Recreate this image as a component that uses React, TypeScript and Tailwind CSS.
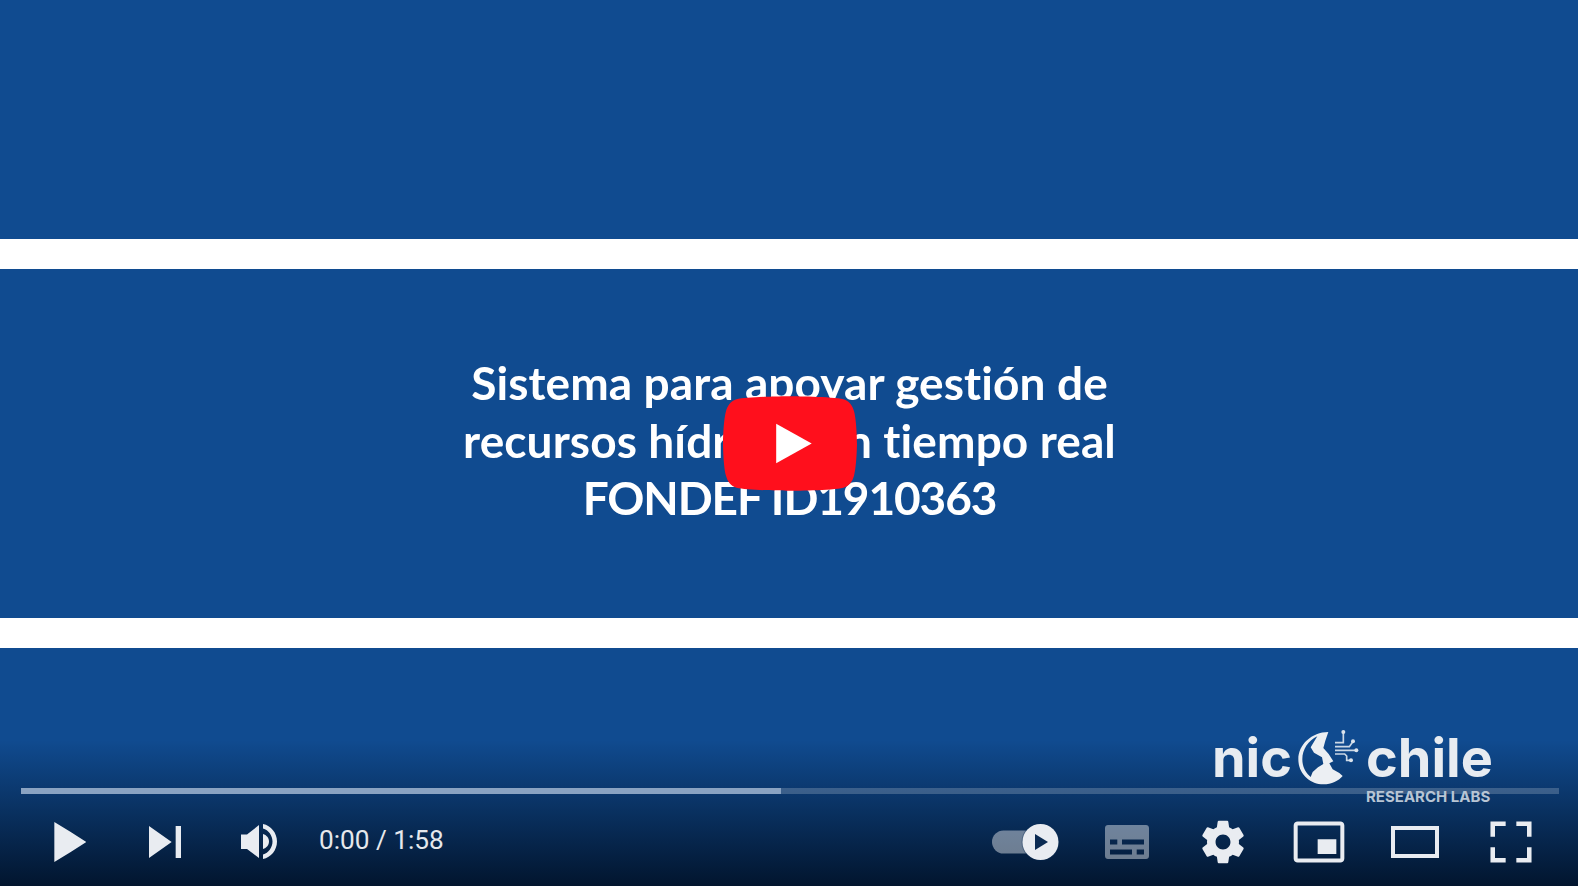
/* Embedded video player: paused title card with YouTube controls on top. */

function Icon({ d, className = 'w-24 h-24' }: { d: string; className?: string }) {
  return (
    <svg viewBox="0 0 36 36" className={className} fill="#e9ecf1" fillRule="evenodd">
      <path d={d} />
    </svg>
  );
}

const ICONS = {
  play: 'M12.5,25.5 L18.5,21.8 L18.5,14.2 L12.5,10.5 Z M18.5,21.8 L24.5,18 L24.5,18 L18.5,14.2 Z',
  next: 'M12,24 L20.5,18 L12,12 V24 Z M22,12 v12 h2 V12 h-2 Z',
  settings:
    'm23.94,18.78 c.03,-0.25 .05,-0.51 .05,-0.78 0,-0.27 -0.02,-0.52 -0.05,-0.78 l1.68,-1.32 c.15,-0.12 .19,-0.33 .09,-0.51 l-1.6,-2.76 c-0.09,-0.17 -0.31,-0.24 -0.48,-0.17 l-1.99,.8 c-0.41,-0.32 -0.86,-0.58 -1.35,-0.78 l-0.30,-2.12 c-0.02,-0.19 -0.19,-0.33 -0.39,-0.33 l-3.2,0 c-0.2,0 -0.36,.14 -0.39,.33 l-0.30,2.12 c-0.48,.2 -0.93,.47 -1.35,.78 l-1.99,-0.8 c-0.18,-0.07 -0.39,0 -0.48,.17 l-1.6,2.76 c-0.1,.17 -0.05,.39 .09,.51 l1.68,1.32 c-0.03,.25 -0.05,.52 -0.05,.78 0,.26 .02,.52 .05,.78 l-1.68,1.32 c-0.15,.12 -0.19,.33 -0.09,.51 l1.6,2.76 c.09,.17 .31,.24 .48,.17 l1.99,-0.8 c.41,.32 .86,.58 1.35,.78 l.30,2.12 c.02,.19 .19,.33 .39,.33 l3.2,0 c.2,0 .36,-0.14 .39,-0.33 l.30,-2.12 c.48,-0.2 .93,-0.47 1.35,-0.78 l1.99,.8 c.18,.07 .39,0 .48,-0.17 l1.6,-2.76 c.09,-0.17 .05,-0.39 -0.09,-0.51 l-1.68,-1.32 Z m-5.94,2.01 c-1.54,0 -2.8,-1.25 -2.8,-2.8 0,-1.54 1.25,-2.8 2.8,-2.8 1.54,0 2.8,1.25 2.8,2.8 0,1.54 -1.25,2.8 -2.8,2.8 Z',
  miniplayer:
    'M24.5,17 H17.5 V22.5 H24.5 Z M27.5,24.2 V11.8 C27.5,10.9 26.8,10.3 26,10.3 H10 C9.2,10.3 8.5,10.9 8.5,11.8 V24.2 C8.5,25.1 9.2,25.7 10,25.7 H26 C26.8,25.7 27.5,25.1 27.5,24.2 Z M26,24.2 H10 V11.8 H26 Z',
  theater: 'M27,12 V24 H9 V12 Z M25.5,13.5 H10.5 V22.5 H25.5 Z',
  fullscreen:
    'M10.3,16 h1.7 v-4 h4 v-1.7 H10.3 Z M20,10.3 v1.7 h4 v4 h1.7 V10.3 Z M24,24 h-4 v1.7 h5.7 v-5.7 h-1.7 Z M12,20 H10.3 v5.7 h5.7 v-1.7 h-4 Z',
};

function VolumeIcon() {
  return (
    <svg viewBox="0 0 36 36" className="w-9 h-9 -ml-1" fill="#e9ecf1">
      <path d="M0,10.5 H6 L18,1 V34 L6,25 H0 Z" />
      <path d="M22,10 C25.5,11 28,14 28,17.5 C28,21 25.5,24 22,25 Z" />
      <path d="M22,0 C30,1.5 36,9 36,17.5 C36,26 30,33.5 22,35 V30.5 C27.5,29 31.5,23.5 31.5,17.5 C31.5,11.5 27.5,6 22,4.5 Z" />
    </svg>
  );
}

function AutoplayToggle() {
  return (
    <svg viewBox="0 0 68 38" className="w-[68px] h-[38px]" fill="none">
      <rect x="0" y="7.5" width="46" height="23" rx="11.5" fill="#ffffff" fillOpacity="0.42" />
      <circle cx="48.5" cy="19" r="19" fill="#0a2a52" fillOpacity="0.35" />
      <circle cx="48.5" cy="19" r="18" fill="#e9ecf1" />
      <path d="M43,11 L56,19 L43,27 Z" fill="#0a2a52" />
    </svg>
  );
}

function CaptionsIcon() {
  return (
    <svg viewBox="0 0 44 34" className="w-11 h-[34px]" fill="#ffffff" fillOpacity="0.42" fillRule="evenodd">
      <path d="M3,0 H41 C42.7,0 44,1.3 44,3 V31 C44,32.7 42.7,34 41,34 H3 C1.3,34 0,32.7 0,31 V3 C0,1.3 1.3,0 3,0 Z M5,14.5 V19.5 H12.3 V14.5 Z M17,14.5 V19.5 H39 V14.5 Z M5,24.5 V29.5 H27 V24.5 Z M31.7,24.5 V29.5 H39 V24.5 Z" />
    </svg>
  );
}

function GlobeMark() {
  return (
    <svg viewBox="0 0 240 204" className="absolute left-[1290px] top-[722px] w-20 h-[68px]" fill="none">
      <path
        d="M115,30 C65,30 25,68 25,112 C25,155 60,187 100,187 C125,187 145,177 158,162 L148,153 L128,142 L118,124 L130,118 L116,96 L100,78 L106,56 Z M82,43 C55,55 37,82 37,112 C37,135 47,152 62,165 L68,150 L84,136 L100,126 L96,106 L72,92 L62,76 Z"
        fill="#eceff3"
        fillRule="evenodd"
      />
      <path
        d="M160,32 V62 H135 M135,74 H178 L188,60 M135,85 H198 M135,96 H164 L170,102 V115 H182"
        stroke="#cbd8e6"
        strokeWidth="5"
      />
      <circle cx="160" cy="30" r="6" fill="#dbe3ec" />
      <circle cx="189" cy="58" r="6" fill="#dbe3ec" />
      <circle cx="199" cy="85" r="6" fill="#dbe3ec" />
      <circle cx="183" cy="115" r="6" fill="#dbe3ec" />
    </svg>
  );
}

function BigPlayButton() {
  return (
    <svg viewBox="0 0 68 48" className="absolute left-[723px] top-[396px] w-[134px] h-[95px]">
      <path
        d="M66.52,7.74c-0.78-2.93-2.49-5.41-5.42-6.19C55.79,.13,34,0,34,0S12.21,.13,6.9,1.55C3.97,2.33,2.27,4.81,1.48,7.74C0.06,13.05,0,24,0,24s0.06,10.95,1.48,16.26c0.78,2.93,2.49,5.41,5.42,6.19C12.21,47.87,34,48,34,48s21.79-0.13,27.1-1.55c2.93-0.78,4.64-3.26,5.42-6.19C67.94,34.95,68,24,68,24S67.94,13.05,66.52,7.74z"
        fill="#ff0f1c"
      />
      <path d="M45,24 L27,14 V34 Z" fill="#ffffff" />
    </svg>
  );
}

export default function App() {
  return (
    <div className="relative w-[1578px] h-[886px] overflow-hidden bg-[#104b90] font-['Roboto',sans-serif]">
      {/* Title card */}
      <div className="flex flex-col h-full">
        <div className="h-[239px]" />
        <div className="h-[30px] bg-white" />
        <div className="h-[349px] flex items-center justify-center">
          <h1 className="font-['Lato',sans-serif] font-bold text-[46px] leading-[57.5px] tracking-[0.1px] text-center text-white -mt-[6px] ml-[1px] blur-[0.4px] [font-variant-ligatures:none]">
            Sistema para apoyar gestión de
            <br />
            recursos hídricos en tiempo real
            <br />
            <span className="tracking-[-1.1px]">FONDEF ID1910363</span>
          </h1>
        </div>
        <div className="h-[30px] bg-white" />
        <div className="flex-1" />
      </div>

      <BigPlayButton />

      {/* Player chrome */}
      <div className="absolute inset-x-0 bottom-0 h-[146px] pl-[21px] pr-[19px] flex flex-col justify-end bg-gradient-to-b from-transparent to-[#02152e]">
        <div className="h-[6px] bg-white/20 mb-[-1px]">
          <div className="h-full w-[760px] bg-[#8aa3c2]" />
        </div>
        <div className="flex items-center h-[93px] pt-[4px]">
          <Icon d={ICONS.play} />
          <Icon d={ICONS.next} />
          <div className="w-24 flex justify-center">
            <VolumeIcon />
          </div>
          <span className="ml-[10px] -mt-[2px] text-[26.2px] text-[#e6e8ec]">0:00 / 1:58</span>
          <div className="ml-auto flex items-center">
            <div className="w-24 flex justify-center pr-[10px]">
              <AutoplayToggle />
            </div>
            <div className="w-24 flex justify-center">
              <CaptionsIcon />
            </div>
            <Icon d={ICONS.settings} />
            <Icon d={ICONS.miniplayer} />
            <Icon d={ICONS.theater} />
            <Icon d={ICONS.fullscreen} />
          </div>
        </div>
      </div>

      {/* Watermark that is part of the video */}
      <div className="absolute left-[1212px] top-[725px] font-['Inter',sans-serif] font-bold text-[54px] leading-[66px] text-[#e8ecf1] blur-[0.4px]">
        nic
      </div>
      <div className="absolute left-[1366px] top-[725px] font-['Inter',sans-serif] font-bold text-[54px] leading-[66px] text-[#e8ecf1] blur-[0.4px]">
        chile
      </div>
      <div className="absolute left-[1366px] top-[787px] font-['Inter',sans-serif] font-bold text-[15px] leading-5 text-[#b8c5d4]">
        RESEARCH LABS
      </div>
      <GlobeMark />
    </div>
  );
}
